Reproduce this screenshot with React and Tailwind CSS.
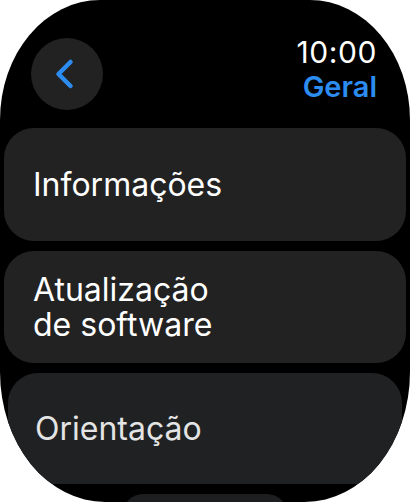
import React from "react";

const items = [
  { label: "Informações", cls: "h-[113px] px-[29px] bg-[#222222]", text: "text-white" },
  { label: "Atualização\nde software", cls: "h-[112px] px-[29px] bg-[#222222]", text: "text-white" },
  { label: "Orientação", cls: "h-[111px] mx-[4px] px-[27px] bg-[#1f2123]", text: "text-[#e4e4e4]" },
];

function BackButton() {
  return (
    <button className="w-[72px] h-[72px] rounded-full bg-[#222222] flex items-center justify-center">
      <svg width="28" height="34" viewBox="0 0 28 34" fill="none">
        <path
          d="M17.5 5 L5.5 17 L17.5 29"
          stroke="#2d8cf0"
          strokeWidth="4.5"
          strokeLinecap="round"
          strokeLinejoin="round"
        />
      </svg>
    </button>
  );
}

export default function App() {
  return (
    <div className="w-[410px] h-[502px] bg-white" style={{ fontFamily: "Inter, 'Noto Sans', sans-serif" }}>
      <div className="w-full h-full bg-black rounded-t-[100px_120px] rounded-b-[105px_130px] overflow-hidden">
        <header className="h-[128px] flex justify-between pl-[31px] pr-[33px]">
          <div className="pt-[38px]">
            <BackButton />
          </div>
          <div className="pt-[35px] flex flex-col items-end">
            <span className="text-white text-[30px] leading-[34px] tracking-[0.6px]">10:00</span>
            <span className="text-[#2d8cf0] text-[29px] leading-[36px] font-semibold">Geral</span>
          </div>
        </header>
        <div className="flex flex-col gap-[10px] px-[4px]">
          {items.map((item) => (
            <div
              key={item.label}
              className={"shrink-0 rounded-[30px] flex items-center " + item.cls}
            >
              <span className={"text-[32px] leading-[35px] whitespace-pre-line " + item.text}>
                {item.label}
              </span>
            </div>
          ))}
          <div className="shrink-0 w-[164px] h-[40px] mx-auto rounded-[20px] bg-[#1c1e20]" />
        </div>
      </div>
    </div>
  );
}
